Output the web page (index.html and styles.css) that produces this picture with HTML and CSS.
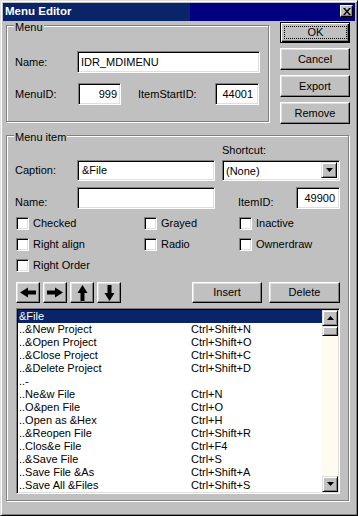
FILE: index.html
```html
<!DOCTYPE html>
<html lang="en">
<head>
  <meta charset="UTF-8" />
  <title>Menu Editor</title>
  <link rel="stylesheet" href="styles.css">
</head>
<body>
  <div class="window">
    <div class="titlebar">
      <span class="title">Menu Editor</span>
      <button class="close">
        <svg width="8" height="7" viewBox="0 0 8 7"><path d="M0 0h2l2 2.5L6 0h2L5 3.5 8 7H6L4 4.5 2 7H0l3-3.5z"/></svg>
      </button>
    </div>

    <div class="top">
      <!-- Menu -->
      <div class="group group-menu">
        <div class="group-title">Menu</div>
        <div class="row row-name">
          <span class="lbl w-name">Name:</span>
          <div class="field field-name">IDR_MDIMENU</div>
        </div>
        <div class="row row-ids">
          <span class="lbl w-menuid">MenuID:</span>
          <div class="field num field-menuid">999</div>
          <span class="lbl w-start">ItemStartID:</span>
          <div class="field num field-start">44001</div>
        </div>
      </div>

      <div class="actions">
        <button class="btn btn-default"><span class="focus">OK</span></button>
        <button class="btn">Cancel</button>
        <button class="btn">Export</button>
        <button class="btn">Remove</button>
      </div>
    </div>

    <!-- Menu item -->
    <div class="group group-item">
      <div class="group-title">Menu item</div>

      <div class="row-caption">
        <div class="pair">
          <span class="lbl w-name">Caption:</span>
          <div class="field field-caption">&amp;File</div>
        </div>
        <div class="shortcut">
          <span class="lbl">Shortcut:</span>
          <div class="combo">
            <span class="combo-text">(None)</span>
            <span class="combo-btn">
              <svg width="7" height="4" viewBox="0 0 7 4"><path d="M0 0h7L3.5 4z"/></svg>
            </span>
          </div>
        </div>
      </div>

      <div class="row-itemname">
        <span class="lbl w-name">Name:</span>
        <div class="field field-caption field-tall"></div>
        <span class="lbl w-itemid">ItemID:</span>
        <div class="field num field-itemid">49900</div>
      </div>

      <div class="checks">
        <label class="check"><span class="box"></span>Checked</label>
        <label class="check"><span class="box"></span>Grayed</label>
        <label class="check"><span class="box"></span>Inactive</label>
        <label class="check"><span class="box"></span>Right align</label>
        <label class="check"><span class="box"></span>Radio</label>
        <label class="check"><span class="box"></span>Ownerdraw</label>
        <label class="check"><span class="box"></span>Right Order</label>
      </div>

      <div class="toolbar">
        <button class="btn arrow"><svg width="16" height="11" viewBox="0 0 16 11"><path d="M0 5.5 8 .5v3h8v4H8v3z"/></svg></button>
        <button class="btn arrow"><svg width="16" height="11" viewBox="0 0 16 11"><path d="M16 5.5 8 .5v3H0v4h8v3z"/></svg></button>
        <button class="btn arrow"><svg width="11" height="16" viewBox="0 0 11 16"><path d="M5.5 0 10.5 8h-3v8h-4V8h-3z"/></svg></button>
        <button class="btn arrow"><svg width="11" height="16" viewBox="0 0 11 16"><path d="M5.5 16 10.5 8h-3V0h-4v8h-3z"/></svg></button>
        <button class="btn btn-insert">Insert</button>
        <button class="btn btn-delete">Delete</button>
      </div>

      <div class="listbox">
        <div class="items">
          <div class="item selected"><span>&amp;File</span><span></span></div>
          <div class="item"><span>..&amp;New Project</span><span>Ctrl+Shift+N</span></div>
          <div class="item"><span>..&amp;Open Project</span><span>Ctrl+Shift+O</span></div>
          <div class="item"><span>..&amp;Close Project</span><span>Ctrl+Shift+C</span></div>
          <div class="item"><span>..&amp;Delete Project</span><span>Ctrl+Shift+D</span></div>
          <div class="item"><span>..-</span><span></span></div>
          <div class="item"><span>..Ne&amp;w File</span><span>Ctrl+N</span></div>
          <div class="item"><span>..O&amp;pen File</span><span>Ctrl+O</span></div>
          <div class="item"><span>..Open as &amp;Hex</span><span>Ctrl+H</span></div>
          <div class="item"><span>..&amp;Reopen File</span><span>Ctrl+Shift+R</span></div>
          <div class="item"><span>..Clos&amp;e File</span><span>Ctrl+F4</span></div>
          <div class="item"><span>..&amp;Save File</span><span>Ctrl+S</span></div>
          <div class="item"><span>..Save File &amp;As</span><span>Ctrl+Shift+A</span></div>
          <div class="item"><span>..Save All &amp;Files</span><span>Ctrl+Shift+S</span></div>
        </div>
        <div class="scrollbar">
          <span class="sb-btn"><svg width="7" height="4" viewBox="0 0 7 4"><path d="M3.5 0 7 4H0z"/></svg></span>
          <span class="sb-thumb"></span>
          <span class="sb-track"></span>
          <span class="sb-btn"><svg width="7" height="4" viewBox="0 0 7 4"><path d="M0 0h7L3.5 4z"/></svg></span>
        </div>
      </div>
    </div>
  </div>
</body>
</html>
```

FILE: styles.css
```css
* {
  box-sizing: border-box;
}

body {
  margin: 0;
  background: #c0c0c0;
  font-family: "Liberation Sans", Arial, sans-serif;
  font-size: 11px;
  line-height: 13px;
  color: #000;
}

button {
  font: inherit;
  color: #000;
  padding: 0;
}

.window {
  width: 358px;
  height: 516px;
  padding: 2px;
  border: 1px solid;
  border-color: #dfdfdf #000 #000 #dfdfdf;
  box-shadow: inset 1px 1px #fff, inset -1px -1px #808080;
  background: #c0c0c0;
}

/* barra de título */
.titlebar {
  display: flex;
  height: 18px;
  padding: 0 2px;
  background: linear-gradient(to right, #0a246a 0, #0a246a 53%, #000080 53%);
  color: #fff;
}

.title {
  font-weight: bold;
  font-size: 11.5px;
  line-height: 16px;
}

.close {
  margin: 2px 0 0 auto;
  width: 13px;
  height: 12px;
  display: flex;
  align-items: center;
  justify-content: center;
  background: #c0c0c0;
  border: 1px solid;
  border-color: #fff #000 #000 #fff;
  box-shadow: inset -1px -1px #808080;
}

/* botones */
.btn {
  height: 22px;
  background: #c0c0c0;
  border: 1px solid;
  border-color: #fff #000 #000 #fff;
  box-shadow: inset -1px -1px #808080, inset 1px 1px #dfdfdf;
  display: flex;
  align-items: center;
  justify-content: center;
}

.btn-default {
  height: 21px;
  border-color: #000;
  box-shadow: inset 1px 1px #fff, inset -1px -1px #000, inset -2px -2px #808080;
  padding: 3px 2px 3px 3px;
}

.focus {
  display: block;
  width: 100%;
  height: 100%;
  border: 1px dotted #000;
  line-height: 11px;
}

/* campos */
.field {
  height: 22px;
  background: #fff;
  border: 1px solid;
  border-color: #808080 #fff #fff #808080;
  box-shadow: inset 1px 1px #000, inset -1px -1px #dfdfdf;
  padding: 4px 3px;
  white-space: nowrap;
}

.num {
  text-align: right;
}

.lbl {
  flex: none;
  white-space: nowrap;
}

/* group boxes */
.group {
  border: 1px solid #808080;
  box-shadow: inset 1px 1px #fff, 1px 1px #fff;
  padding: 0 8px;
}

.group-title {
  display: table;
  margin: -5px 0 0 -1px;
  padding: 0 1px;
  background: #c0c0c0;
}

.top {
  display: flex;
  align-items: flex-start;
  padding-left: 3px;
}

.group-menu {
  width: 263px;
  height: 97px;
  margin-top: 4px;
}

.row {
  display: flex;
  align-items: center;
}

.row-name {
  margin-top: 17px;
}

.row-ids {
  margin-top: 10px;
}

.w-name {
  width: 62px;
}

.w-menuid {
  width: 63px;
}

.w-start {
  width: 77px;
  margin-left: 17px;
}

.w-itemid {
  width: 58px;
  margin-left: 23px;
}

.field-name {
  width: 185px;
}

.field-menuid {
  width: 43px;
  padding-right: 3px;
}

.field-start {
  width: 44px;
  padding-right: 5px;
}

.actions {
  display: flex;
  flex-direction: column;
  gap: 5px;
  width: 70px;
  margin: 1px 0 0 11px;
}

.group-item {
  width: 343px;
  height: 366px;
  margin: 11px 0 0 3px;
}

.row-caption {
  display: flex;
  align-items: flex-end;
}

.pair {
  display: flex;
  align-items: center;
}

.field-caption {
  width: 138px;
  height: 21px;
  padding: 3px 4px;
}

.field-tall {
  height: 22px;
}

.shortcut {
  display: flex;
  flex-direction: column;
  width: 118px;
  margin-left: 7px;
}

.combo {
  margin-top: 3px;
  height: 21px;
  display: flex;
  background: #fff;
  border: 1px solid;
  border-color: #808080 #fff #fff #808080;
  box-shadow: inset 1px 1px #000, inset -1px -1px #dfdfdf;
  padding: 1px 2px 2px 1px;
}

.combo-text {
  flex: 1;
  padding: 3px 2px;
}

.combo-btn {
  width: 16px;
  height: 16px;
  display: flex;
  align-items: center;
  justify-content: center;
  background: #c0c0c0;
  border: 1px solid;
  border-color: #dfdfdf #000 #000 #dfdfdf;
  box-shadow: inset 1px 1px #fff, inset -1px -1px #808080;
}

.row-itemname {
  display: flex;
  align-items: flex-end;
  margin-top: 6px;
}

.row-itemname .w-name {
  width: 62px;
}

.field-itemid {
  width: 44px;
  padding-right: 4px;
}

/* checkboxes */
.checks {
  display: grid;
  grid-template-columns: 128px 95px 1fr;
  grid-auto-rows: 13px;
  row-gap: 8px;
  margin: 8px 0 0 1px;
}

.check {
  display: flex;
  align-items: center;
  gap: 4px;
  white-space: nowrap;
}

.box {
  width: 13px;
  height: 13px;
  background: #fff;
  border: 1px solid;
  border-color: #808080 #fff #fff #808080;
  box-shadow: inset 1px 1px #000, inset -1px -1px #dfdfdf;
}

/* flechas e insertar / borrar */
.toolbar {
  display: flex;
  gap: 3px;
  margin: 10px 0 0 1px;
}

.toolbar .btn {
  height: 21px;
}

.arrow {
  width: 24px;
}

.btn-insert {
  width: 70px;
  margin-left: auto;
}

.btn-delete {
  width: 71px;
  margin-left: 4px;
}

/* lista */
.listbox {
  display: flex;
  width: 324px;
  height: 186px;
  margin: 5px 0 0 1px;
  border: 1px solid;
  border-color: #808080 #fff #fff #808080;
  box-shadow: inset 1px 1px #000, inset -1px -1px #dfdfdf;
  padding: 1px;
  background: #fff;
}

.items {
  flex: 1;
}

.item {
  display: grid;
  grid-template-columns: 172px 1fr;
  height: 13px;
  padding-left: 1px;
  white-space: nowrap;
}

.item.selected {
  background: #0a246a;
  color: #fff;
}

.scrollbar {
  width: 16px;
  display: flex;
  flex-direction: column;
  background: #fffbf0;
}

.sb-btn,
.sb-thumb {
  height: 16px;
  display: flex;
  align-items: center;
  justify-content: center;
  background: #c0c0c0;
  border: 1px solid;
  border-color: #dfdfdf #000 #000 #dfdfdf;
  box-shadow: inset 1px 1px #fff, inset -1px -1px #808080;
}

.sb-thumb {
  height: 10px;
}

.sb-track {
  flex: 1;
}
```
